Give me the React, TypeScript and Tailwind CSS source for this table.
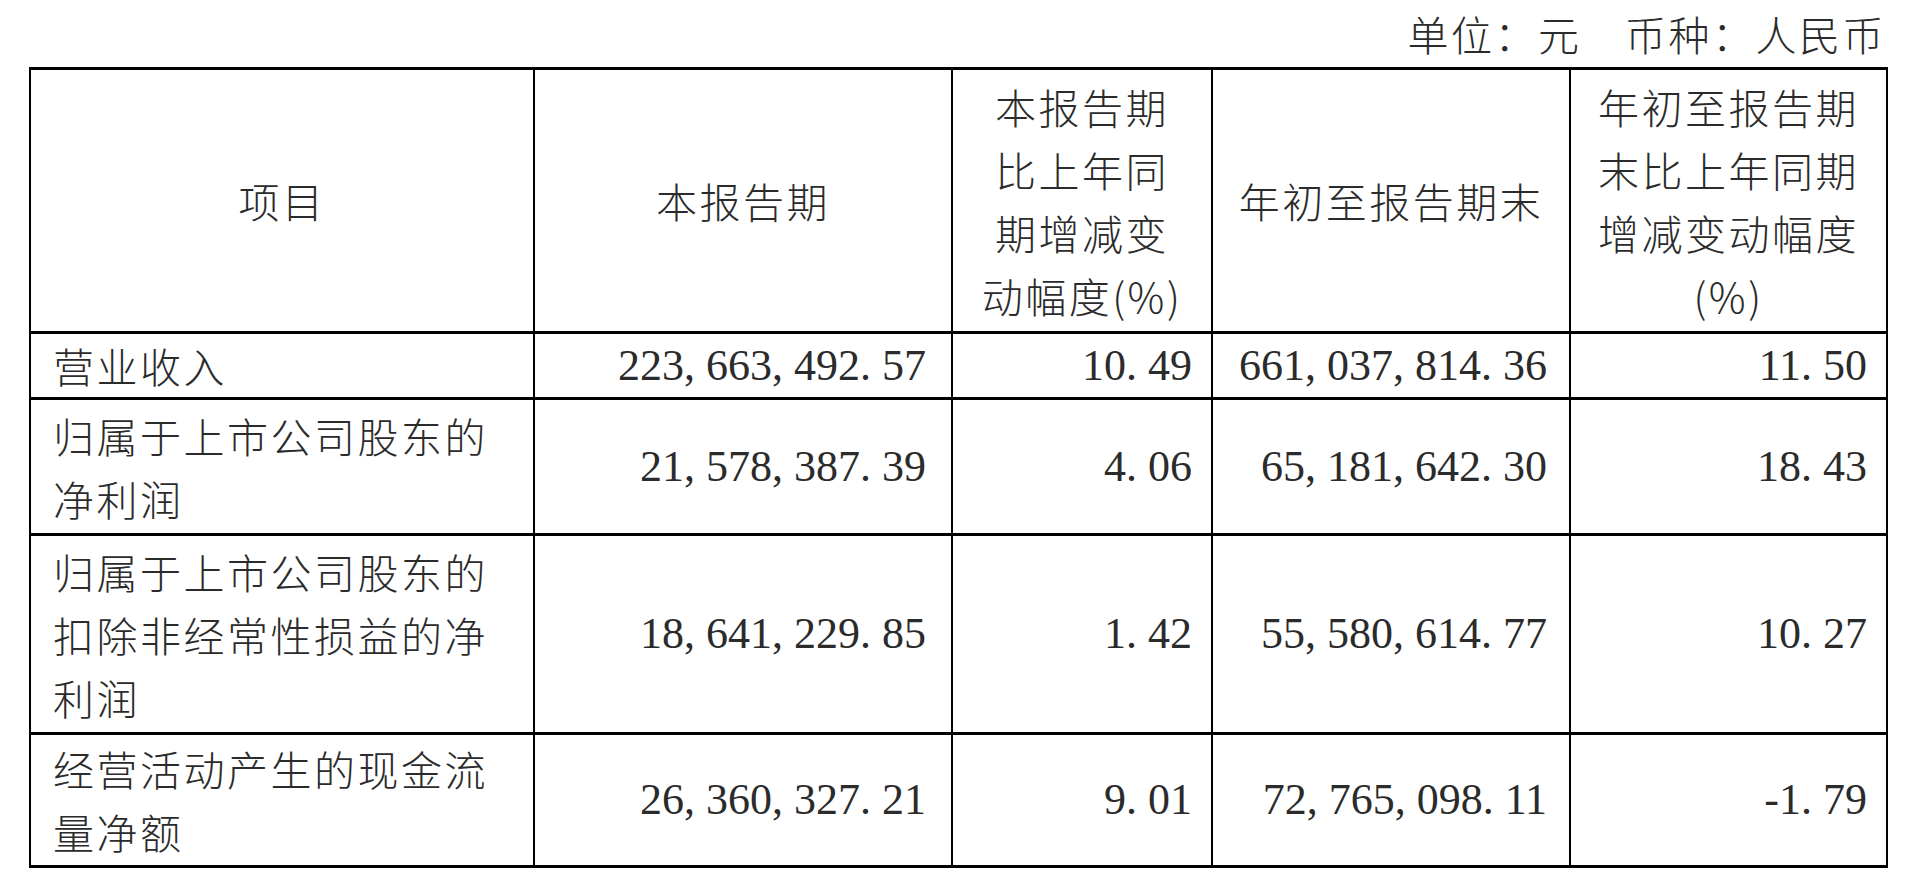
import React from "react";

const cjk = "font-['Noto_Sans_CJK_SC','Noto_Sans_CJK_TC',sans-serif] font-light text-[41px] tracking-[2.5px]";
const num = "font-['Liberation_Serif','Times_New_Roman',serif] text-[44px]";

const rows = [
  { label: ["营业收入"], v: ["223,663,492.57", "10.49", "661,037,814.36", "11.50"] },
  { label: ["归属于上市公司股东的", "净利润"], v: ["21,578,387.39", "4.06", "65,181,642.30", "18.43"] },
  {
    label: ["归属于上市公司股东的", "扣除非经常性损益的净", "利润"],
    v: ["18,641,229.85", "1.42", "55,580,614.77", "10.27"],
  },
  { label: ["经营活动产生的现金流", "量净额"], v: ["26,360,327.21", "9.01", "72,765,098.11", "-1.79"] },
];

const padR = ["pr-[25px]", "pr-[19px]", "pr-[22px]", "pr-[19px]"];

function Num({ s }: { s: string }) {
  const parts = s.split(/([,.])/).filter((p) => p !== "");
  return (
    <span className={`${num} leading-none whitespace-nowrap`}>
      {parts.map((p, i) =>
        p === "," || p === "." ? (
          <span key={i} className="mr-[0.25em]">
            {p}
          </span>
        ) : (
          <span key={i}>{p}</span>
        )
      )}
    </span>
  );
}

function Lines({ lines }: { lines: string[] }) {
  return (
    <div className={`${cjk} leading-[63px] whitespace-nowrap`}>
      {lines.map((l, i) => (
        <div key={i}>{l}</div>
      ))}
    </div>
  );
}

export default function App() {
  const headCell = "bg-white flex items-center justify-center text-center";
  return (
    <div className="w-[1920px] h-[885px] bg-white text-[#2b2b2b] pl-[29px] flex flex-col overflow-hidden">
      <div className="w-[1859px] h-[67px] flex items-center justify-end pr-[2px]">
        <span className={`${cjk} leading-none whitespace-nowrap`}>单位：元　币种：人民币</span>
      </div>
      <div className="w-[1859px] grid grid-cols-[502px_416px_258px_356px_315px] grid-rows-[261px_63px_133px_196px_130px] gap-x-[2px] gap-y-[3px] px-[2px] py-[3px] bg-black">
        <div className={headCell}>
          <Lines lines={["项目"]} />
        </div>
        <div className={headCell}>
          <Lines lines={["本报告期"]} />
        </div>
        <div className={headCell}>
          <Lines lines={["本报告期", "比上年同", "期增减变", "动幅度(%)"]} />
        </div>
        <div className={headCell}>
          <Lines lines={["年初至报告期末"]} />
        </div>
        <div className={headCell}>
          <Lines lines={["年初至报告期", "末比上年同期", "增减变动幅度", "(%)"]} />
        </div>
        {rows.map((r, ri) => (
          <React.Fragment key={ri}>
            <div className="bg-white flex items-center pl-[22px]">
              <Lines lines={r.label} />
            </div>
            {r.v.map((v, vi) => (
              <div key={vi} className={`bg-white flex items-center justify-end ${padR[vi]}`}>
                <Num s={v} />
              </div>
            ))}
          </React.Fragment>
        ))}
      </div>
    </div>
  );
}
